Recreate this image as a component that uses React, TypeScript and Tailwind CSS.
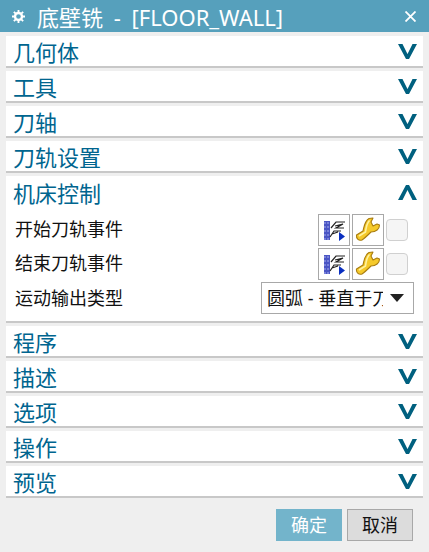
import { Fragment } from "react";

const font = { fontFamily: '"Noto Sans", "Noto Sans CJK SC", sans-serif' };

function Chevron({ up = false }: { up?: boolean }) {
  return (
    <svg width="19" height="15" viewBox="0 0 19 15" className="shrink-0">
      <path
        d={up ? "M0 15 H4.5 L9.5 5 L14.5 15 H19 L11 0 H8 Z" : "M0 0 H4.5 L9.5 10 L14.5 0 H19 L11 15 H8 Z"}
        fill="#00607f"
      />
    </svg>
  );
}

function Section({ title }: { title: string }) {
  return (
    <div className="h-[32px] bg-white border-b-2 border-[#c8c8c8] flex items-center justify-between pl-[7px] pr-[6px]">
      <span className="text-[22px] leading-none text-[#00658f] translate-y-[1px]">{title}</span>
      <Chevron />
    </div>
  );
}

function EventIcon() {
  return (
    <svg width="30" height="30" viewBox="0 0 30 30">
      <rect x="5" y="6" width="6" height="19" fill="#4a55c4" />
      <path d="M5 8h6M5 12h6M5 16h6M5 20h6M5 24h6" stroke="#a6aeec" strokeWidth="1" strokeDasharray="2 1" />
      <path d="M12 13 L17 7 H26 M16 11 L24 9 L17 13 H25" fill="none" stroke="#222" strokeWidth="1.2" />
      <path d="M11 22 L15 16 H22 M13 19 L19 17" fill="none" stroke="#222" strokeWidth="1.2" />
      <path d="M20 17 L26 21.5 L20 26 Z" fill="#0a2fc0" />
    </svg>
  );
}

function WrenchIcon() {
  return (
    <svg width="30" height="30" viewBox="0 0 30 30">
      <path
        d="M3.5 20 L10 16 C11 12 11.5 6 16 3.5 L20 3 L18 7 L20 11 L24 9 L26.5 10 C26.5 14 23 17 18 17 C15 20 12 23 9 25 C6 26 3 24 3.5 20 Z"
        fill="#f5c92a"
        stroke="#a87c10"
        strokeWidth="1.1"
        strokeLinejoin="round"
      />
      <path d="M6 21 L12.5 17 C13 13 14 8 16.5 5.5" fill="none" stroke="#fff2a0" strokeWidth="1.6" />
    </svg>
  );
}

function IconButton({ children }: { children: React.ReactNode }) {
  return (
    <div className="w-[32px] h-[32px] border border-[#a8a8a8] bg-white flex items-center justify-center">
      {children}
    </div>
  );
}

function EventRow({ label }: { label: string }) {
  return (
    <div className="h-[34px] flex items-center justify-between pl-[9px] pr-[15px]">
      <span className="text-[18px] leading-none text-[#111] -translate-y-[1px]">{label}</span>
      <div className="flex items-center gap-[2px]">
        <IconButton>
          <EventIcon />
        </IconButton>
        <IconButton>
          <WrenchIcon />
        </IconButton>
        <div className="w-[22px] h-[22px] rounded-[4px] border border-[#d0d0d0] bg-[#f5f5f5]" />
      </div>
    </div>
  );
}

export default function App() {
  return (
    <div style={font} className="w-[429px] h-[552px] bg-[#efefef] flex flex-col overflow-hidden">
      {/* Title bar */}
      <div className="h-[32px] shrink-0 bg-[#56a0bc] flex items-center text-white pl-[12px] pr-[13px] pt-[1px]">
        <svg width="13" height="13" viewBox="0 0 14 14">
          <circle cx="7" cy="7" r="3.8" fill="none" stroke="#fff" strokeWidth="2.6" />
          <path d="M7 0v3M7 11v3M0 7h3M11 7h3M2 2l2 2M10 10l2 2M12 2l-2 2M4 10l-2 2" stroke="#fff" strokeWidth="2" />
        </svg>
        <span className="ml-[12px] text-[22px] leading-none whitespace-nowrap [word-spacing:5px]">底壁铣 - [FLOOR_WALL]</span>
        <svg width="11" height="11" viewBox="0 0 11 11" className="ml-auto">
          <path d="M0.5 0.5 L10.5 10.5 M10.5 0.5 L0.5 10.5" stroke="#fff" strokeWidth="1.8" />
        </svg>
      </div>

      <div className="flex flex-col gap-[3px] pt-[4px] px-[6px]">
        {["几何体", "工具", "刀轴", "刀轨设置"].map((t) => (
          <Fragment key={t}>
            <Section title={t} />
          </Fragment>
        ))}

        {/* Expanded group */}
        <div className="h-[147px] bg-white border-b-2 border-[#c8c8c8]">
          <div className="h-[37px] flex items-center justify-between pl-[7px] pr-[6px] pb-[5px]">
            <span className="text-[22px] leading-none text-[#00658f] translate-y-[1px]">机床控制</span>
            <Chevron up />
          </div>
          <EventRow label="开始刀轨事件" />
          <EventRow label="结束刀轨事件" />
          <div className="h-[33px] flex items-center justify-between pl-[9px] pr-[9px]">
            <span className="text-[18px] leading-none text-[#111]">运动输出类型</span>
            <div className="w-[153px] h-[32px] border border-[#a8a8a8] bg-white flex items-center pl-[5px] pr-[9px]">
              <span className="text-[18px] leading-none text-[#111] whitespace-nowrap overflow-hidden w-[116px]">圆弧 - 垂直于刀轴</span>
              <svg width="14" height="8" viewBox="0 0 14 8" className="ml-auto">
                <path d="M0 0 H14 L7 8 Z" fill="#222" />
              </svg>
            </div>
          </div>
        </div>

        {["程序", "描述", "选项", "操作", "预览"].map((t) => (
          <Fragment key={t}>
            <Section title={t} />
          </Fragment>
        ))}
      </div>

      {/* Footer buttons */}
      <div className="flex justify-end gap-[5px] pt-[11px] pr-[16px]">
        <div className="w-[66px] h-[32px] bg-[#73b4cb] text-white text-[18px] flex items-center justify-center">确定</div>
        <div className="w-[66px] h-[32px] bg-[#dcdcdc] border border-[#a8a8a8] text-[#111] text-[18px] flex items-center justify-center">取消</div>
      </div>
    </div>
  );
}
